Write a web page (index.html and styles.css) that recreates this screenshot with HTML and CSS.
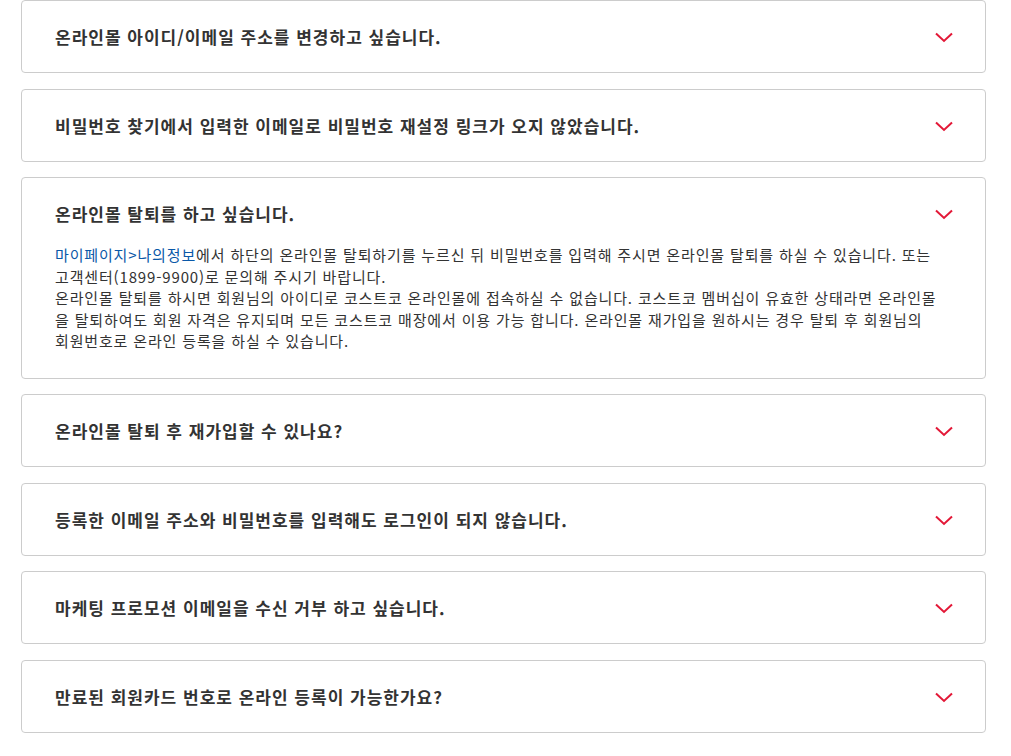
FILE: index.html
```html
<!DOCTYPE html>
<html lang="ko">
<head>
<meta charset="utf-8">
<link rel="stylesheet" href="styles.css">
</head>
<body>
<div class="faq">
  <div class="item">
    <div class="head"><span class="q">온라인몰 아이디/이메일 주소를 변경하고 싶습니다.</span><svg class="chev" width="18" height="11" viewBox="0 0 18 11"><path d="M1 1.5 L9 9 L17 1.5" fill="none" stroke="#e31837" stroke-width="2"/></svg></div>
  </div>
  <div class="item">
    <div class="head"><span class="q">비밀번호 찾기에서 입력한 이메일로 비밀번호 재설정 링크가 오지 않았습니다.</span><svg class="chev" width="18" height="11" viewBox="0 0 18 11"><path d="M1 1.5 L9 9 L17 1.5" fill="none" stroke="#e31837" stroke-width="2"/></svg></div>
  </div>
  <div class="item open">
    <div class="head"><span class="q">온라인몰 탈퇴를 하고 싶습니다.</span><svg class="chev" width="18" height="11" viewBox="0 0 18 11"><path d="M1 1.5 L9 9 L17 1.5" fill="none" stroke="#e31837" stroke-width="2"/></svg></div>
    <div class="body"><a class="link">마이페이지&gt;나의정보</a>에서 하단의 온라인몰 탈퇴하기를 누르신 뒤 비밀번호를 입력해 주시면 온라인몰 탈퇴를 하실 수 있습니다. 또는 고객센터(1899-9900)로 문의해 주시기 바랍니다.<br>온라인몰 탈퇴를 하시면 회원님의 아이디로 코스트코 온라인몰에 접속하실 수 없습니다. 코스트코 멤버십이 유효한 상태라면 온라인몰을 탈퇴하여도 회원 자격은 유지되며 모든 코스트코 매장에서 이용 가능 합니다. 온라인몰 재가입을 원하시는 경우 탈퇴 후 회원님의 회원번호로 온라인 등록을 하실 수 있습니다.</div>
  </div>
  <div class="item">
    <div class="head"><span class="q">온라인몰 탈퇴 후 재가입할 수 있나요?</span><svg class="chev" width="18" height="11" viewBox="0 0 18 11"><path d="M1 1.5 L9 9 L17 1.5" fill="none" stroke="#e31837" stroke-width="2"/></svg></div>
  </div>
  <div class="item">
    <div class="head"><span class="q">등록한 이메일 주소와 비밀번호를 입력해도 로그인이 되지 않습니다.</span><svg class="chev" width="18" height="11" viewBox="0 0 18 11"><path d="M1 1.5 L9 9 L17 1.5" fill="none" stroke="#e31837" stroke-width="2"/></svg></div>
  </div>
  <div class="item">
    <div class="head"><span class="q">마케팅 프로모션 이메일을 수신 거부 하고 싶습니다.</span><svg class="chev" width="18" height="11" viewBox="0 0 18 11"><path d="M1 1.5 L9 9 L17 1.5" fill="none" stroke="#e31837" stroke-width="2"/></svg></div>
  </div>
  <div class="item">
    <div class="head"><span class="q">만료된 회원카드 번호로 온라인 등록이 가능한가요?</span><svg class="chev" width="18" height="11" viewBox="0 0 18 11"><path d="M1 1.5 L9 9 L17 1.5" fill="none" stroke="#e31837" stroke-width="2"/></svg></div>
  </div>
</div>
</body>
</html>
```

FILE: styles.css
```css
html, body {
  margin: 0;
  padding: 0;
  background: #fff;
}
body {
  font-family: "Noto Sans CJK KR", "Noto Sans", sans-serif;
  color: #333;
}
.faq {
  margin-left: 21px;
  width: 965px;
  display: flex;
  flex-direction: column;
  gap: 15.5px;
}
.item {
  border: 1px solid #ccc;
  border-radius: 4px;
  padding: 23px 33px;
}
.head {
  display: flex;
  align-items: center;
  justify-content: space-between;
  height: 25px;
}
.q {
  font-size: 17px;
  font-weight: bold;
  line-height: 25px;
  letter-spacing: 1px;
  color: #333;
}
.chev {
  display: block;
  flex: none;
  margin-right: -1px;
  margin-top: 2px;
}
.body {
  margin-top: 18px;
  padding-right: 10px;
  padding-bottom: 3px;
  font-size: 15px;
  line-height: 21.5px;
  letter-spacing: 0.85px;
  color: #333;
}
.link {
  color: #0a58a8;
}
```
